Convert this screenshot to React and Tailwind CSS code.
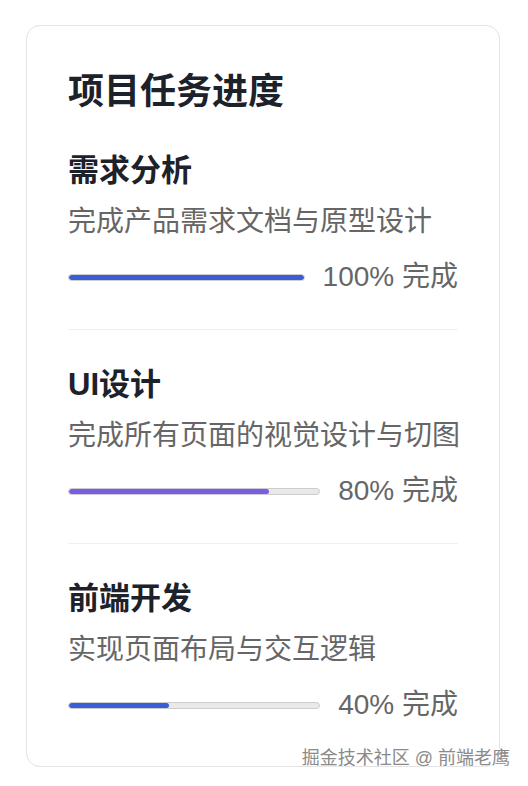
import React from 'react';

const tasks = [
  { name: '需求分析', desc: '完成产品需求文档与原型设计', percent: 100, color: 'bg-[#3b5ed8]' },
  { name: 'UI设计', desc: '完成所有页面的视觉设计与切图', percent: 80, color: 'bg-[#7b5ce3]' },
  { name: '前端开发', desc: '实现页面布局与交互逻辑', percent: 40, color: 'bg-[#3b5ed8]' },
];

function TaskItem({ task, last }) {
  return (
    <div className={last ? 'pt-[34px]' : 'pt-[34px] pb-[31px] border-b border-[#f0f0f0]'}>
      <h3 className="text-[31px] leading-[42px] font-semibold text-[#1d2129]">{task.name}</h3>
      <p className="mt-[9px] whitespace-nowrap text-[28px] leading-[42px] text-[#666]">{task.desc}</p>
      <div className="mt-[13px] flex items-center gap-[18px]">
        <div className="flex-1 h-[7px] rounded-full bg-[#e9e9e9] border border-[#cdcdcd] overflow-hidden">
          <div className={`h-full rounded-full ${task.color}`} style={{ width: `${task.percent}%` }} />
        </div>
        <span className="shrink-0 text-[28px] leading-[42px] text-[#666]">{task.percent}% 完成</span>
      </div>
    </div>
  );
}

export default function App() {
  return (
    <div
      className="relative min-h-[786px] bg-white pt-[25px] pl-[26px]"
      style={{ fontFamily: '"Liberation Sans", "Noto Sans CJK SC", sans-serif' }}
    >
      <div className="w-[474px] rounded-[14px] border border-[#e3e3e3] bg-white pl-[41px] pr-[41px] pt-[42px] pb-[40px]">
        <h2 className="text-[36px] leading-[48px] font-bold text-[#1d2129]">项目任务进度</h2>
        {tasks.map((t, i) => (
          <TaskItem key={t.name} task={t} last={i === tasks.length - 1} />
        ))}
      </div>
      <div className="absolute right-[18px] top-[746px] text-[18px] leading-[24px] text-[#8a8a8a] [text-shadow:0_0_2px_#fff,0_0_2px_#fff]">
        掘金技术社区 @ 前端老鹰
      </div>
    </div>
  );
}
